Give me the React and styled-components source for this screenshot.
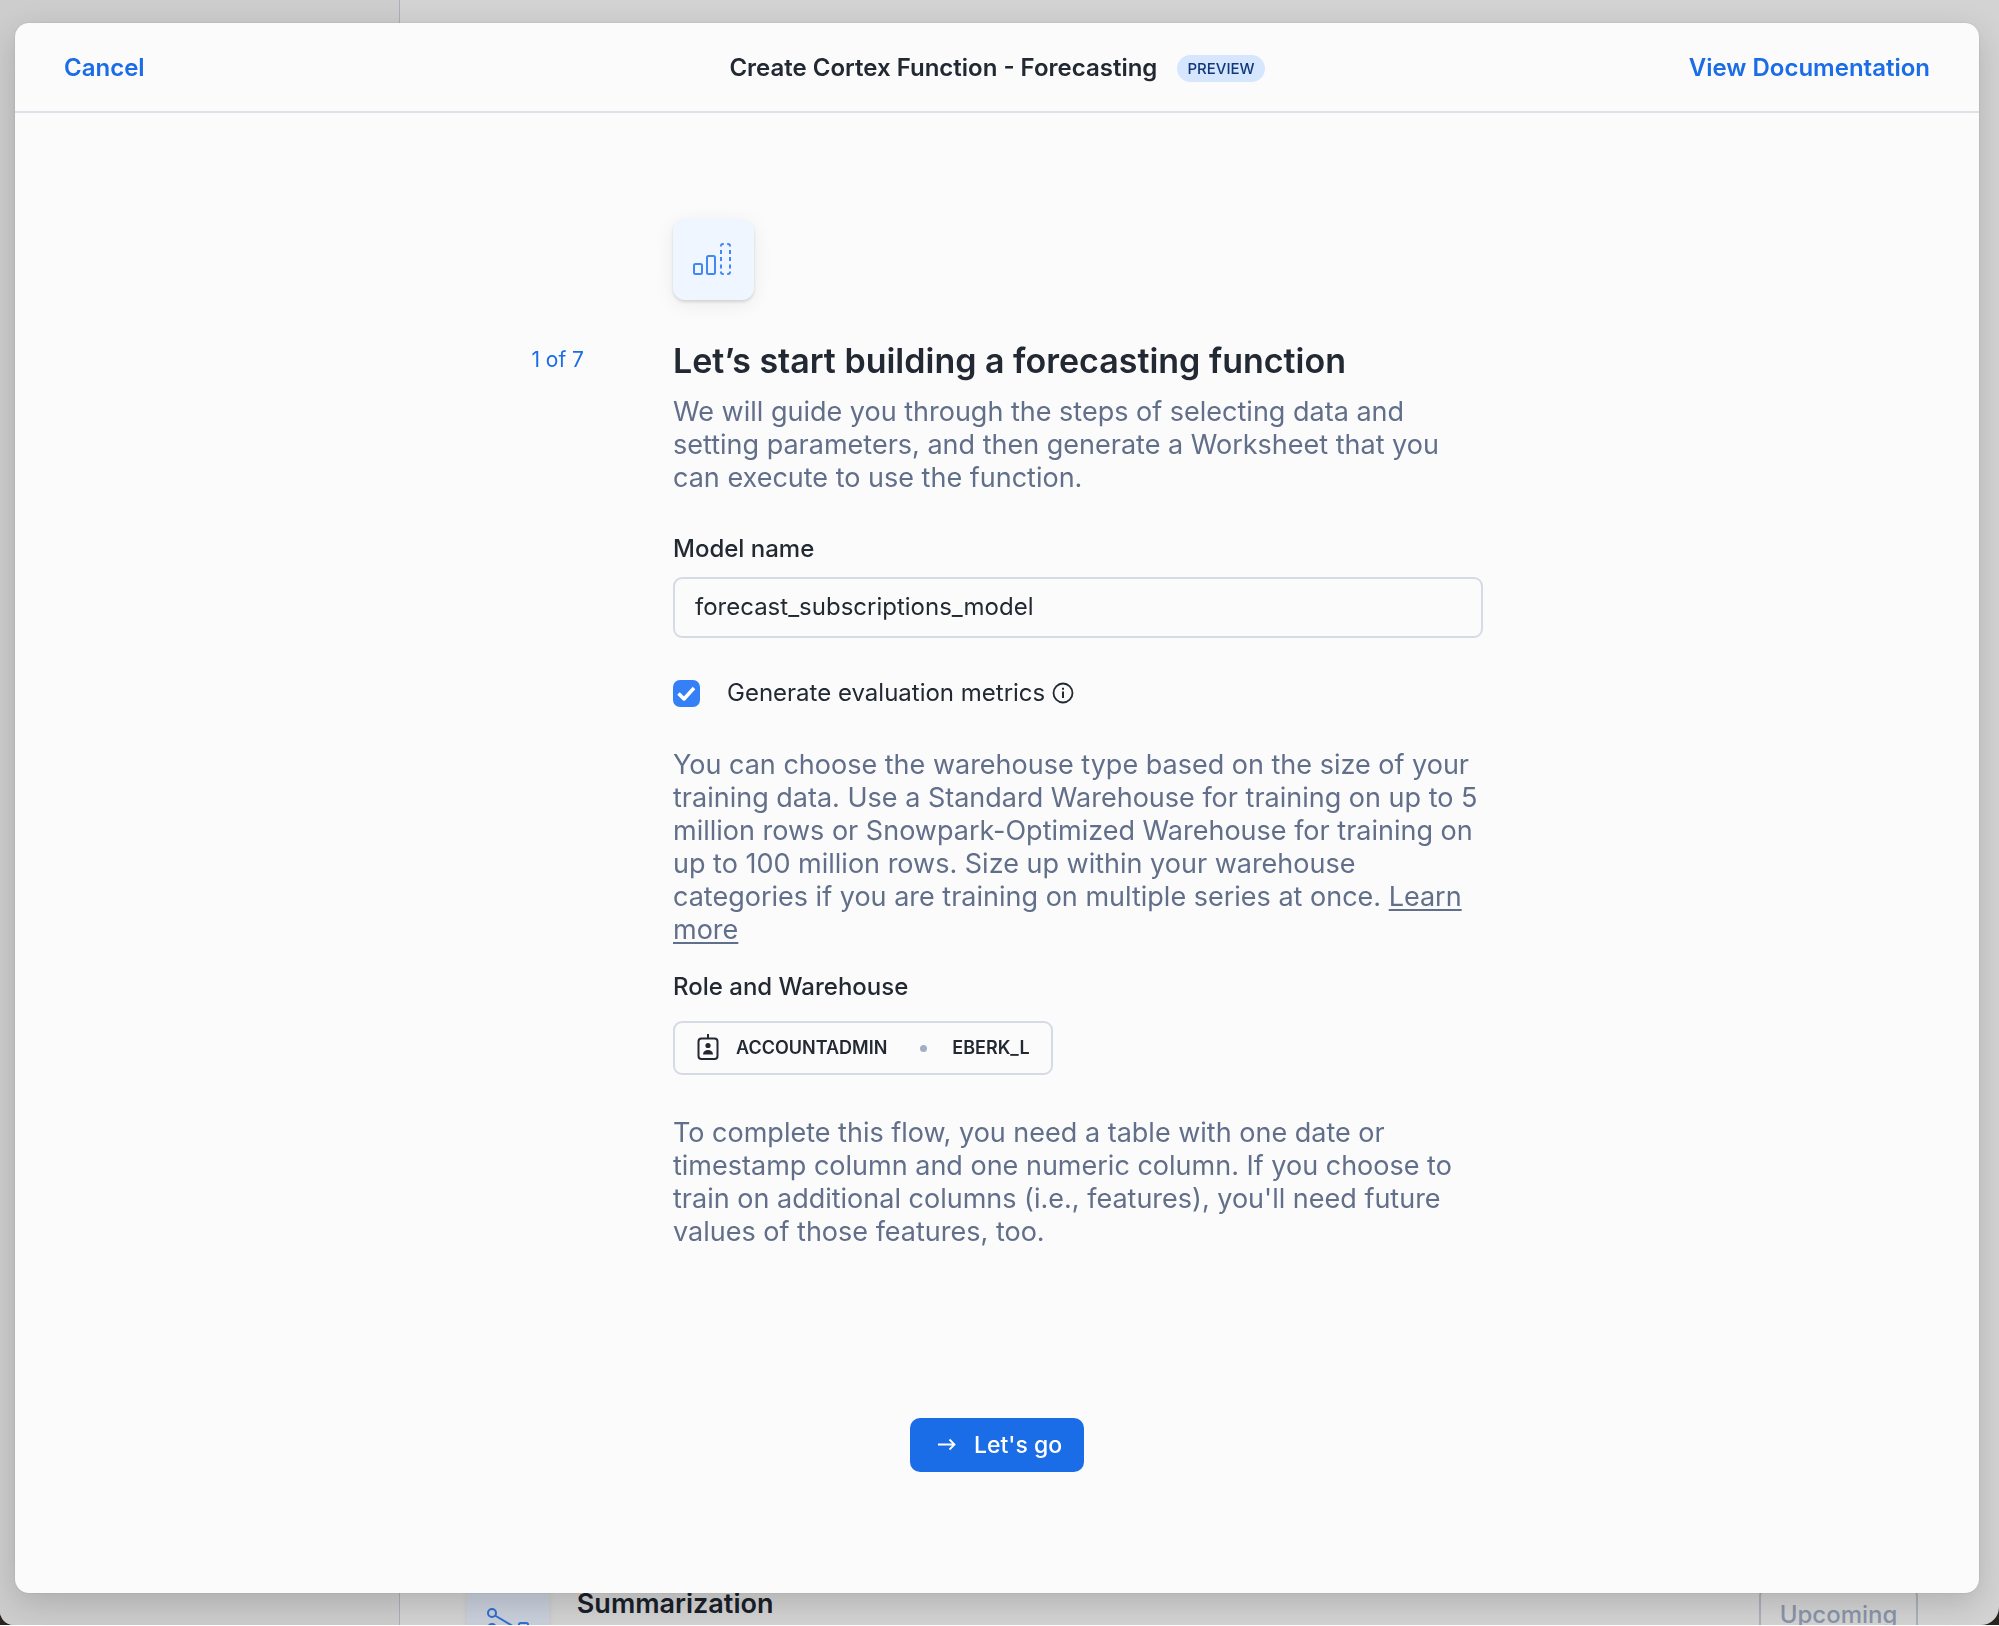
import React, { useState } from "react";
import styled, { createGlobalStyle } from "styled-components";

const color = {
  ink: "#222933",
  muted: "#626f8a",
  link: "#1a6ce7",
  line: "#d5dae4",
  surface: "#fbfbfb",
};

const GlobalStyle = createGlobalStyle`
  *, *::before, *::after { box-sizing: border-box; }
  html, body { margin: 0; padding: 0; }
  body {
    background: #28241f;
    color: ${color.ink};
    font-family: Inter, "Liberation Sans", sans-serif;
    font-size: 24px;
    line-height: 32px;
  }
  button, input { font: inherit; color: inherit; margin: 0; }
  h1, h2, h3, p { margin: 0; }
`;

const Desktop = styled.div`
  height: 100vh;
  overflow: hidden;
  border-bottom: 1px solid #fff;
`;

const Backdrop = styled.div`
  display: flex;
  height: 100%;
  overflow: hidden;
  border-radius: 0 0 18px 14px;
  background: #d3d3d3;
`;

const Sidebar = styled.aside`
  width: 20%;
  flex: none;
  background: #cdcdcd;
  border-right: 1px solid #a9b0ba;
`;

const Main = styled.main`
  flex: 1;
  display: flex;
  flex-direction: column;
  justify-content: flex-end;
  padding: 0 81px 0 67px;
`;

const FeatureRow = styled.section`
  display: flex;
  align-items: flex-start;
  gap: 28px;
  height: 40px;
`;

const FeatureTile = styled.div`
  flex: none;
  width: 82px;
  height: 82px;
  padding: 22px 20px;
  border-radius: 12px;
  background: #c9d0dc;
  box-shadow: 0 1px 6px rgba(0, 0, 0, 0.08);
`;

const FeatureName = styled.h3`
  flex: 1;
  padding-top: 2px;
  font-size: 27px;
  line-height: 34px;
  font-weight: 600;
  color: #19202a;
`;

const UpcomingButton = styled.button`
  margin-top: 3px;
  width: 159px;
  height: 54px;
  padding: 0;
  border: 2px solid #a9b0ba;
  border-radius: 8px;
  background: transparent;
  color: #8a94aa;
  font-weight: 500;
`;

const Overlay = styled.div`
  position: fixed;
  inset: 0;
  display: flex;
  padding: 23px 20px 33px 15px;
`;

const Dialog = styled.div`
  flex: 1;
  display: flex;
  flex-direction: column;
  overflow: auto;
  border-radius: 14px;
  background: ${color.surface};
  box-shadow: 0 0 2px rgba(0, 0, 0, 0.15), 0 10px 32px rgba(0, 0, 0, 0.16);
`;

const Header = styled.header`
  flex: none;
  display: grid;
  grid-template-columns: 1fr auto 1fr;
  align-items: center;
  height: 90px;
  padding: 2px 49px 0;
  border-bottom: 2px solid #dde1ea;
`;

const CancelButton = styled.button`
  justify-self: start;
  padding: 0;
  border: 0;
  background: none;
  color: ${color.link};
  font-weight: 600;
  cursor: pointer;
`;

const DocsLink = styled.a`
  justify-self: end;
  color: ${color.link};
  font-weight: 600;
  text-decoration: none;
`;

const TitleGroup = styled.div`
  display: flex;
  align-items: center;
  gap: 20px;
`;

const Title = styled.h1`
  font-size: 24px;
  line-height: 32px;
  font-weight: 600;
`;

const Badge = styled.span`
  padding: 0 10px;
  border-radius: 14px;
  background: #d6e6ff;
  color: #11397a;
  font-size: 15px;
  line-height: 27px;
  font-weight: 500;
`;

const Body = styled.div`
  flex: 1;
  display: flex;
  flex-direction: column;
  align-items: center;
  padding: 106px 24px 0;
`;

const Step = styled.div`
  display: grid;
  grid-template-columns: 73px minmax(0, 810px);
  column-gap: 89px;
`;

const StepCount = styled.span`
  padding-top: 125px;
  text-align: right;
  font-size: 21px;
  color: ${color.link};
  white-space: nowrap;
`;

const Form = styled.form`
  display: flex;
  flex-direction: column;
  align-items: stretch;
`;

const IconTile = styled.div`
  display: grid;
  place-items: center;
  width: 81px;
  height: 81px;
  border-radius: 12px;
  background: #eff6ff;
  box-shadow: 0 2px 3px rgba(0, 0, 0, 0.12), 0 4px 20px rgba(0, 0, 0, 0.07);
`;

const Heading = styled.h2`
  margin-top: 39px;
  font-size: 34px;
  line-height: 44px;
  font-weight: 600;
`;

const Text = styled.p`
  margin-top: ${(p) => p.$top}px;
  color: ${color.muted};
  font-size: 27px;
  line-height: 33px;
`;

const InlineLink = styled.a`
  color: inherit;
  text-decoration: underline;
  text-decoration-thickness: 2px;
  text-underline-offset: 3px;
`;

const Label = styled.label`
  margin-top: ${(p) => p.$top}px;
  font-weight: 500;
`;

const TextInput = styled.input`
  margin-top: 12px;
  width: 100%;
  height: 61px;
  padding: 0 20px 2px;
  border: 2px solid ${color.line};
  border-radius: 9px;
  background: transparent;
  outline: none;
`;

const CheckRow = styled.div`
  display: flex;
  align-items: center;
  margin-top: 39px;
`;

const CheckBox = styled.span`
  display: grid;
  width: 27px;
  height: 27px;
  margin-right: 27px;

  > * { grid-area: 1 / 1; }
  > svg { pointer-events: none; place-self: center; }
`;

const CheckInput = styled.input`
  appearance: none;
  width: 27px;
  height: 27px;
  border: 2px solid ${color.line};
  border-radius: 7px;

  &:checked {
    border-color: #3580f6;
    background: #3580f6;
  }
`;

const InfoButton = styled.button`
  display: grid;
  margin-left: 7px;
  padding: 0;
  border: 0;
  background: none;
`;

const ContextButton = styled.button`
  align-self: flex-start;
  display: flex;
  align-items: center;
  height: 54px;
  margin-top: 18px;
  padding: 0 21px 0 22px;
  border: 2px solid ${color.line};
  border-radius: 9px;
  background: transparent;
  font-size: 18px;
  font-weight: 600;
`;

const RoleName = styled.span`
  margin-left: 17px;
`;

const Dot = styled.span`
  width: 7px;
  height: 7px;
  margin: 0 25px 0 33px;
  border-radius: 50%;
  background: #a0aec6;
`;

const PrimaryButton = styled.button`
  display: flex;
  align-items: center;
  gap: 18px;
  height: 54px;
  margin-top: 170px;
  padding: 0 22px 0 27px;
  border: 0;
  border-radius: 10px;
  background: ${color.link};
  color: #fff;
  font-size: 23px;
  font-weight: 500;
  cursor: pointer;
`;

const ForecastIcon = () => (
  <svg width="42" height="34" viewBox="1 1 42 34" fill="none" stroke="#4188f5" strokeWidth="2" aria-hidden="true">
    <rect x="2" y="22" width="8" height="10" rx="1.5" />
    <rect x="15" y="14" width="8" height="18" rx="1.5" />
    <path
      d="M29 4.5V4a2 2 0 0 1 2-2h.8M35.2 2h.8a2 2 0 0 1 2 2v.5M29 29.5v.5a2 2 0 0 0 2 2h.8M35.2 32h.8a2 2 0 0 0 2-2v-.5M29 8v4M38 8v4M29 15v4M38 15v4M29 22.500v4M38 22.500v4"
    />
  </svg>
);

const SummaryIcon = () => (
  <svg width="42" height="42" viewBox="0 0 42 42" fill="none" stroke="#2f6fd0" strokeWidth="2" aria-hidden="true">
    <circle cx="5" cy="6" r="4" />
    <circle cx="5" cy="21" r="4" />
    <circle cx="5" cy="36" r="4" />
    <path d="M8 8.500 L29 21 L8 33.500" />
    <rect x="32" y="16" width="9" height="9" rx="1.500" />
  </svg>
);

const CheckIcon = () => (
  <svg width="21" height="17" viewBox="0 0 21 17" fill="none" stroke="#fff" strokeWidth="3.500" strokeLinejoin="round" aria-hidden="true">
    <path d="M2.500 8.500l5.500 5.500 10-11" />
  </svg>
);

const InfoIcon = () => (
  <svg width="22" height="22" viewBox="0 0 22 22" fill="none" stroke={color.ink} strokeWidth="1.8" aria-hidden="true">
    <circle cx="11" cy="11" r="9.500" />
    <path d="M11 9.500v6.500" strokeWidth="2" />
    <path d="M11 5.800v2" strokeWidth="2" />
  </svg>
);

const BadgeIcon = () => (
  <svg width="22" height="28" viewBox="0 0 22 28" fill="none" stroke={color.ink} strokeWidth="2" aria-hidden="true">
    <rect x="1.500" y="4.500" width="19" height="20.500" rx="3" />
    <path d="M11 0v4" />
    <circle cx="11" cy="11.500" r="2.600" fill={color.ink} stroke="none" />
    <path d="M6 20.500c0-3 2.200-4.500 5-4.500s5 1.500 5 4.500z" fill={color.ink} stroke="none" />
  </svg>
);

const ArrowIcon = () => (
  <svg width="19" height="14" viewBox="0 0 19 14" fill="none" stroke="#fff" strokeWidth="1.8" aria-hidden="true">
    <path d="M1 6.500h16.500M12.500 1.500L17.500 6.500L12.500 11.500" />
  </svg>
);

export default function App() {
  const [modelName, setModelName] = useState("forecast_subscriptions_model");
  const [metrics, setMetrics] = useState(true);

  return (
    <>
      <GlobalStyle />
      <Desktop>
        <Backdrop>
          <Sidebar />
          <Main>
            <FeatureRow>
              <FeatureTile>
                <SummaryIcon />
              </FeatureTile>
              <FeatureName>Summarization</FeatureName>
              <UpcomingButton type="button">Upcoming</UpcomingButton>
            </FeatureRow>
          </Main>
        </Backdrop>
      </Desktop>
      <Overlay>
        <Dialog role="dialog" aria-labelledby="dialog-title">
          <Header>
            <CancelButton type="button">Cancel</CancelButton>
            <TitleGroup>
              <Title id="dialog-title">Create Cortex Function - Forecasting</Title>
              <Badge>PREVIEW</Badge>
            </TitleGroup>
            <DocsLink href="#docs">View Documentation</DocsLink>
          </Header>
          <Body>
            <Step>
              <StepCount>1 of 7</StepCount>
              <Form id="forecast-form" onSubmit={(e) => e.preventDefault()}>
                <IconTile>
                  <ForecastIcon />
                </IconTile>
                <Heading>Let’s start building a forecasting function</Heading>
                <Text $top={12}>
                  We will guide you through the steps of selecting data and setting parameters, and then
                  generate a Worksheet that you can execute to use the function.
                </Text>
                <Label $top={39} htmlFor="model-name">Model name</Label>
                <TextInput
                  id="model-name"
                  type="text"
                  value={modelName}
                  onChange={(e) => setModelName(e.target.value)}
                />
                <CheckRow>
                  <CheckBox>
                    <CheckInput
                      id="metrics"
                      type="checkbox"
                      checked={metrics}
                      onChange={(e) => setMetrics(e.target.checked)}
                    />
                    {metrics && <CheckIcon />}
                  </CheckBox>
                  <label htmlFor="metrics">Generate evaluation metrics</label>
                  <InfoButton type="button" aria-label="About evaluation metrics">
                    <InfoIcon />
                  </InfoButton>
                </CheckRow>
                <Text $top={39}>
                  You can choose the warehouse type based on the size of your training data. Use a
                  Standard Warehouse for training on up to 5 million rows or Snowpark-Optimized Warehouse
                  for training on up to 100 million rows. Size up within your warehouse categories if you
                  are training on multiple series at once. <InlineLink href="#learn">Learn more</InlineLink>
                </Text>
                <Label $top={25} htmlFor="context">Role and Warehouse</Label>
                <ContextButton id="context" type="button">
                  <BadgeIcon />
                  <RoleName>ACCOUNTADMIN</RoleName>
                  <Dot />
                  <span>EBERK_L</span>
                </ContextButton>
                <Text $top={41}>
                  To complete this flow, you need a table with one date or timestamp column and one
                  numeric column. If you choose to train on additional columns (i.e., features), you'll
                  need future values of those features, too.
                </Text>
              </Form>
            </Step>
            <PrimaryButton type="submit" form="forecast-form">
              <ArrowIcon />
              Let's go
            </PrimaryButton>
          </Body>
        </Dialog>
      </Overlay>
    </>
  );
}
